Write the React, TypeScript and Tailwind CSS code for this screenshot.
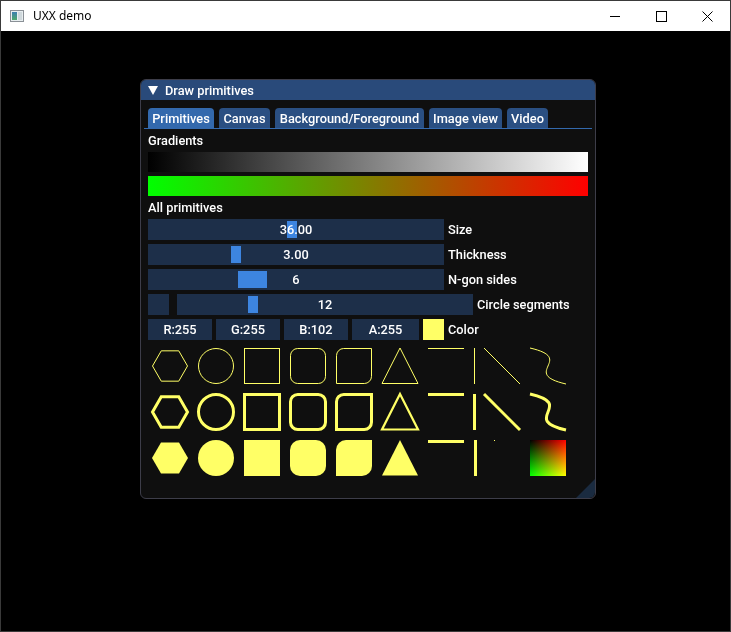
import React from 'react';

const YELLOW = '#ffff66';
const FONT = { fontFamily: 'Roboto, "Noto Sans", sans-serif' };

function AppIcon() {
  return (
    <svg width="14" height="12" viewBox="0 0 14 12">
      <defs>
        <linearGradient id="ico" x1="0" y1="0" x2="0" y2="1">
          <stop offset="0" stopColor="#3d7fb0" />
          <stop offset="1" stopColor="#4fa86a" />
        </linearGradient>
      </defs>
      <rect x="0.5" y="0.5" width="13" height="11" fill="#e8eef0" stroke="#8a9096" />
      <rect x="2" y="2" width="5" height="8" fill="url(#ico)" />
      <rect x="8" y="2" width="4" height="8" fill="#cfd8dc" />
    </svg>
  );
}

function WinControls() {
  return (
    <div className="flex h-full items-center">
      <div className="flex h-full w-[46px] items-center justify-center">
        <svg width="10" height="10" viewBox="0 0 10 10">
          <path d="M0 5.5H10" stroke="#000" strokeWidth="1" />
        </svg>
      </div>
      <div className="flex h-full w-[46px] items-center justify-center">
        <svg width="11" height="11" viewBox="0 0 11 11">
          <rect x="0.5" y="0.5" width="10" height="10" fill="none" stroke="#000" strokeWidth="1" />
        </svg>
      </div>
      <div className="flex h-full w-[46px] items-center justify-center">
        <svg width="11" height="11" viewBox="0 0 11 11">
          <path d="M0.5 0.5L10.5 10.5M10.5 0.5L0.5 10.5" stroke="#000" strokeWidth="1" />
        </svg>
      </div>
    </div>
  );
}

function Slider({ text, grabLeft, grabWidth }: { text: string; grabLeft: number; grabWidth: number }) {
  return (
    <div className="relative flex h-[21px] w-[296px] items-center justify-center bg-[#1d2f49]">
      <div
        className="absolute top-[2px] bottom-[2px] bg-[#3d85e0]"
        style={{ left: grabLeft, width: grabWidth }}
      />
      <span className="relative">{text}</span>
    </div>
  );
}

function SliderRow({ label, text, grabLeft, grabWidth }: { label: string; text: string; grabLeft: number; grabWidth: number }) {
  return (
    <div className="flex h-[21px] items-center gap-[4px]">
      <Slider text={text} grabLeft={grabLeft} grabWidth={grabWidth} />
      <span>{label}</span>
    </div>
  );
}

const col = (i: number) => 4 + i * 46;

function hexPoints(cx: number, cy: number, r: number) {
  const pts: string[] = [];
  for (let k = 0; k < 6; k++) {
    const a = (k * Math.PI) / 3;
    pts.push(`${(cx + r * Math.cos(a)).toFixed(2)},${(cy + r * Math.sin(a)).toFixed(2)}`);
  }
  return pts.join(' ');
}

function cornerPath(x1: number, y1: number, x2: number, y2: number, r: number) {
  return `M${x1} ${y1 + r} A${r} ${r} 0 0 1 ${x1 + r} ${y1} L${x2} ${y1} L${x2} ${y2 - r} A${r} ${r} 0 0 1 ${x2 - r} ${y2} L${x1} ${y2} Z`;
}

function OutlineRow({ y, th }: { y: number; th: number }) {
  const s = { fill: 'none', stroke: YELLOW, strokeWidth: th };
  return (
    <g>
      <polygon points={hexPoints(col(0) + 18, y + 18, 17.5)} {...s} />
      <circle cx={col(1) + 18} cy={y + 18} r={17.5} {...s} />
      <rect x={col(2) + 0.5} y={y + 0.5} width={35} height={35} {...s} />
      <rect x={col(3) + 0.5} y={y + 0.5} width={35} height={35} rx={7.2} {...s} />
      <path d={cornerPath(col(4) + 0.5, y + 0.5, col(4) + 35.5, y + 35.5, 7.2)} {...s} />
      <polygon points={`${col(5) + 18},${y} ${col(5) + 36},${y + 35.5} ${col(5)},${y + 35.5}`} {...s} strokeWidth={th > 1 ? 2.2 : 1} />
      <line x1={col(6)} y1={y + 0.5} x2={col(6) + 36} y2={y + 0.5} {...s} />
      <line x1={col(7) + 0.5} y1={y} x2={col(7) + 0.5} y2={y + 36} {...s} />
      <line x1={col(7) + 10} y1={y} x2={col(7) + 46} y2={y + 36} {...s} />
      <path
        d={`M${col(8) + 10} ${y} C${col(8) + 10 + 46.8} ${y + 10.8} ${col(8) + 10 - 10.8} ${y + 25.2} ${col(8) + 46} ${y + 36}`}
        {...s}
      />
    </g>
  );
}

function FilledRow({ y }: { y: number }) {
  const f = { fill: YELLOW };
  const gx = col(8) + 10;
  return (
    <g>
      <polygon points={hexPoints(col(0) + 18, y + 18, 18)} {...f} />
      <circle cx={col(1) + 18} cy={y + 18} r={18} {...f} />
      <rect x={col(2)} y={y} width={36} height={36} {...f} />
      <rect x={col(3)} y={y} width={36} height={36} rx={10} {...f} />
      <path d={cornerPath(col(4), y, col(4) + 36, y + 36, 10)} {...f} />
      <polygon points={`${col(5) + 18},${y} ${col(5) + 36},${y + 35.5} ${col(5)},${y + 35.5}`} {...f} />
      <rect x={col(6)} y={y} width={36} height={3} {...f} />
      <rect x={col(7)} y={y} width={3} height={36} {...f} />
      <rect x={col(7) + 20} y={y} width={1} height={1} {...f} />
      <rect x={gx} y={y} width={36} height={36} fill="url(#gRed)" />
      <rect x={gx} y={y} width={36} height={36} fill="url(#gGreen)" className="mix-blend-screen" />
    </g>
  );
}

function Canvas() {
  return (
    <svg width="440" height="138" viewBox="0 0 440 138" className="block">
      <defs>
        <linearGradient id="gRed" x1="0" y1="0" x2="1" y2="0">
          <stop offset="0" stopColor="#000000" />
          <stop offset="1" stopColor="#ff0000" />
        </linearGradient>
        <linearGradient id="gGreen" x1="0" y1="0" x2="0" y2="1">
          <stop offset="0" stopColor="#000000" />
          <stop offset="1" stopColor="#00ff00" />
        </linearGradient>
      </defs>
      <OutlineRow y={4} th={1} />
      <OutlineRow y={50} th={3} />
      <FilledRow y={96} />
    </svg>
  );
}

function DrawPrimitives() {
  const tabs = [
    { name: 'Primitives', w: 'w-[66px]', active: true },
    { name: 'Canvas', w: 'w-[51px]', active: false },
    { name: 'Background/Foreground', w: 'w-[149px]', active: false },
    { name: 'Image view', w: 'w-[73px]', active: false },
    { name: 'Video', w: 'w-[41px]', active: false },
  ];
  return (
    <div
      className="relative ml-[139px] mt-[48px] h-[420px] w-[456px] overflow-hidden rounded-[6px] border border-[#3d3d49] bg-[#0f0f0f] text-[12.8px] leading-[15px] font-medium text-white"
      style={FONT}
    >
      {/* title bar */}
      <div className="flex h-[20px] items-center gap-[7px] bg-[#294a7a] pl-[7px]">
        <svg width="10" height="9" viewBox="0 0 10 9">
          <polygon points="0,0 10,0 5,9" fill="#fff" />
        </svg>
        <span>Draw primitives</span>
      </div>

      <div className="flex flex-col gap-[4px] px-[7px] pt-[8px]">
        {/* tab bar */}
        <div className="flex flex-col">
          <div className="flex h-[20px] gap-[5px]">
            {tabs.map((t) => (
              <div
                key={t.name}
                className={`${t.w} flex items-center justify-center rounded-t-[4px] ${t.active ? 'bg-[#3369ad]' : 'bg-[#2a4f82]'}`}
              >
                {t.name}
              </div>
            ))}
          </div>
          <div className="-mx-[4px] h-px bg-[#3369ad]" />
        </div>

        <div className="h-[15px]">Gradients</div>
        <div className="h-[20px] w-[440px] bg-[linear-gradient(to_right,#000000,#ffffff)]" />
        <div className="h-[20px] w-[440px] bg-[linear-gradient(to_right,#00ff00,#ff0000)]" />
        <div className="h-[15px]">All primitives</div>

        <SliderRow label="Size" text="36.00" grabLeft={139} grabWidth={10} />
        <SliderRow label="Thickness" text="3.00" grabLeft={83} grabWidth={10} />
        <SliderRow label="N-gon sides" text="6" grabLeft={90} grabWidth={29} />

        <div className="flex h-[21px] items-center">
          <div className="h-[21px] w-[21px] bg-[#1d2f49]" />
          <div className="ml-[8px] flex items-center gap-[4px]">
            <Slider text="12" grabLeft={71} grabWidth={10} />
            <span>Circle segments</span>
          </div>
        </div>

        <div className="flex h-[21px] items-center gap-[4px]">
          <div className="flex h-full w-[64px] items-center justify-center bg-[#1d2f49]">R:255</div>
          <div className="flex h-full w-[64px] items-center justify-center bg-[#1d2f49]">G:255</div>
          <div className="flex h-full w-[64px] items-center justify-center bg-[#1d2f49]">B:102</div>
          <div className="flex h-full w-[67px] items-center justify-center bg-[#1d2f49]">A:255</div>
          <div className="h-[21px] w-[21px] bg-[#ffff66]" />
          <span>Color</span>
        </div>

        <Canvas />
      </div>

      {/* resize grip */}
      <svg width="20" height="20" viewBox="0 0 20 20" className="absolute right-0 bottom-0">
        <path d="M20 1 L20 14 A6 6 0 0 1 14 20 L1 20 Z" fill="#1a2b40" />
      </svg>
    </div>
  );
}

export default function App() {
  return (
    <div className="flex h-[632px] w-[731px] flex-col border border-[#3a3a3a] bg-black">
      <div className="flex h-[30px] items-center justify-between bg-white">
        <div className="flex items-center gap-[9px] pl-[9px]">
          <AppIcon />
          <span
            className="text-[12px] text-black"
            style={{ fontFamily: '"Noto Sans", "Liberation Sans", sans-serif' }}
          >
            UXX demo
          </span>
        </div>
        <WinControls />
      </div>
      <div className="flex-1">
        <DrawPrimitives />
      </div>
    </div>
  );
}
